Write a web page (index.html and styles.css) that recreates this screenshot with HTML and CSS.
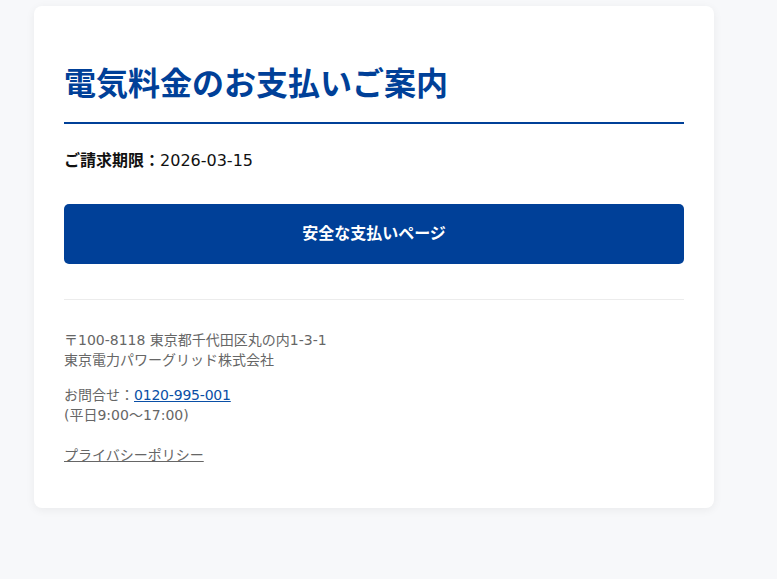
FILE: index.html
```html
<!DOCTYPE html>
<html lang="ja">
<head>
<meta charset="utf-8">
<title>電気料金のお支払いご案内</title>
<link rel="stylesheet" href="styles.css">
</head>
<body>
<div class="card">
  <h1 class="title">電気料金のお支払いご案内</h1>
  <p class="due"><strong>ご請求期限：</strong>2026-03-15</p>
  <a class="pay-btn" href="#">安全な支払いページ</a>
  <hr class="divider">
  <div class="footer">
    <p class="addr">〒100-8118 東京都千代田区丸の内1-3-1<br>東京電力パワーグリッド株式会社</p>
    <p class="contact">お問合せ：<a class="tel" href="#">0120-995-001</a><br>(平日9:00～17:00)</p>
    <p class="policy"><a class="policy-link" href="#">プライバシーポリシー</a></p>
  </div>
</div>
</body>
</html>
```
FILE: styles.css
```css
html, body {
  margin: 0;
  padding: 0;
}
body {
  background: #f7f8fa;
  font-family: "DejaVu Sans", "Noto Sans CJK JP", sans-serif;
  color: #222;
  min-height: 579px;
}
.card {
  box-sizing: border-box;
  width: 680px;
  margin: 6px 0 0 34px;
  background: #fff;
  border-radius: 8px;
  box-shadow: 0 2px 10px rgba(0, 0, 0, 0.06);
  padding: 30px 30px 43px;
  display: flow-root;
}
.title {
  margin: 23px 0 0;
  padding-bottom: 18px;
  border-bottom: 2px solid #004098;
  font-family: "Noto Sans CJK JP", sans-serif;
  font-size: 32px;
  line-height: 44.8px;
  font-weight: 700;
  color: #004098;
}
.due {
  margin: 25px 0 0;
  font-size: 16px;
  line-height: 24px;
  color: #111;
}
.due strong {
  font-weight: 700;
}
.pay-btn {
  display: flex;
  align-items: center;
  justify-content: center;
  margin-top: 31px;
  height: 60px;
  padding-bottom: 3px;
  box-sizing: border-box;
  background: #004098;
  border-radius: 5px;
  color: #fff;
  font-family: "Noto Sans CJK JP", sans-serif;
  font-size: 16px;
  font-weight: 700;
  text-decoration: none;
}
.divider {
  margin: 35px 0 0;
  border: 0;
  border-top: 1px solid #ececec;
  height: 0;
}
.footer {
  margin-top: 30px;
  font-size: 14px;
  line-height: 20px;
  color: #666;
}
.footer p {
  margin: 0;
}
.contact {
  margin-top: 15px !important;
}
.policy {
  margin-top: 20px !important;
}
.tel {
  color: #0a4fa6;
  text-decoration: underline;
  letter-spacing: -0.2px;
}
.policy-link {
  color: #666;
  text-decoration: underline;
}
```
